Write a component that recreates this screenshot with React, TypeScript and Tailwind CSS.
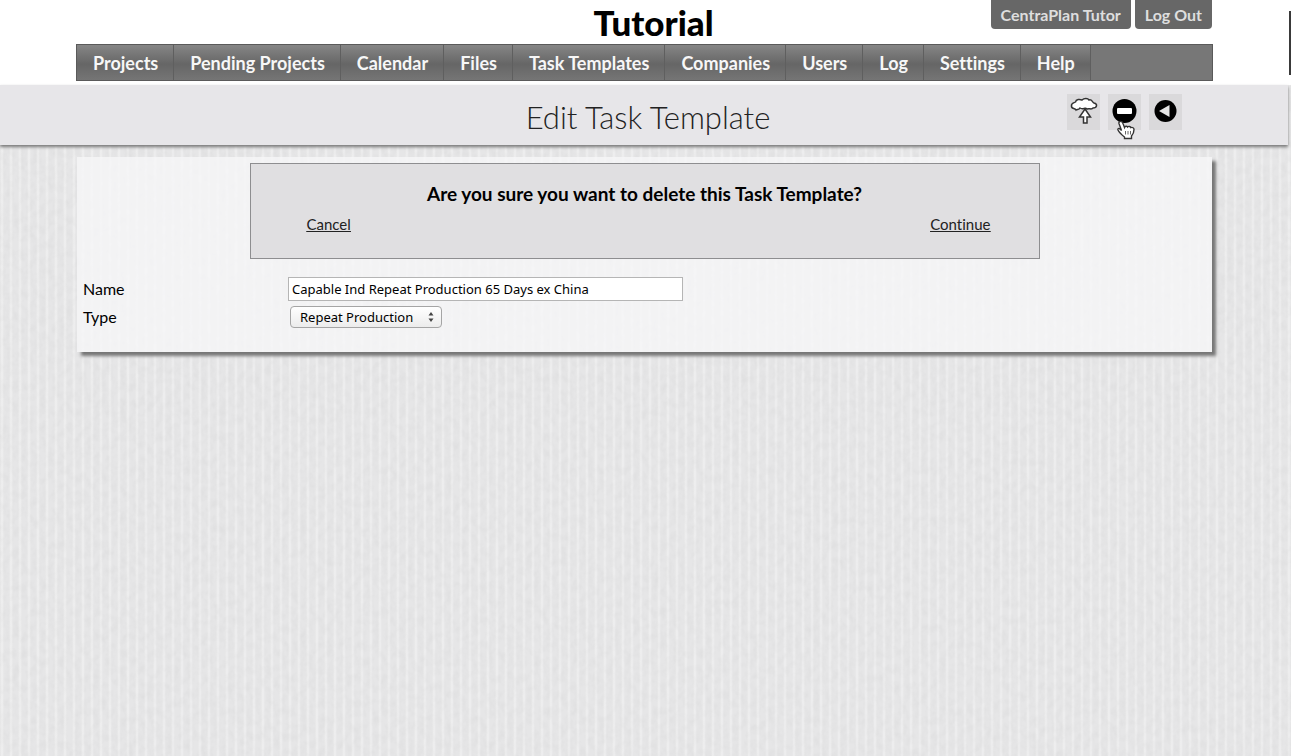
import { useState } from "react";

const navItems = [
    "Projects",
    "Pending Projects",
    "Calendar",
    "Files",
    "Task Templates",
    "Companies",
    "Users",
    "Log",
    "Settings",
    "Help",
];

const templateTypes = ["Repeat Production", "New Production", "Sample"];

// ribbed paper grain behind the page
function PaperTexture() {
    return (
        <svg className="absolute inset-0 -z-10 size-full" aria-hidden="true">
            <filter id="grain" x="0" y="0" width="100%" height="100%">
                <feTurbulence type="fractalNoise" baseFrequency="0.15 0.12" numOctaves="3" seed="4" />
                <feColorMatrix values="0 0 0 0 0.3  0 0 0 0 0.3  0 0 0 0 0.3  0.14 0 0 0 -0.05" />
            </filter>
            <rect width="100%" height="100%" filter="url(#grain)" />
        </svg>
    );
}

function UploadIcon() {
    return (
        <svg viewBox="0 0 32 32" className="size-8" aria-hidden="true">
            <path
                d="M8 16C7 14 3 15 3.500 12C3 9 6 9 7.500 8C8 5 12 5 14 6C16 4 20 4 21 6C24 5 24 8 26 9C30 10 29 14 25 14C24 16 21 14 19 15C17 13 15 16 12 14C11 16 9 15 8 16Z"
                fill="#fff"
                stroke="#333"
                strokeWidth="1.500"
            />
            <path
                d="M17 15L22.500 23H19V29H15.500V23H11.500Z"
                fill="#fff"
                stroke="#333"
                strokeWidth="1.500"
            />
        </svg>
    );
}

function DeleteIcon() {
    return (
        <svg viewBox="0 0 32 32" className="size-8" aria-hidden="true">
            <circle cx="15.500" cy="17" r="12" fill="#000" />
            <rect x="8" y="14" width="15" height="6" rx="1" fill="#fff" />
        </svg>
    );
}

function BackIcon() {
    return (
        <svg viewBox="0 0 32 32" className="size-8" aria-hidden="true">
            <circle cx="15.500" cy="17" r="11" fill="#000" />
            <path d="M9 17L19.500 11V23Z" fill="#e4e4e4" />
        </svg>
    );
}

function HandCursor() {
    return (
        <svg viewBox="0 0 20 20" className="absolute top-[26px] left-2 size-5" aria-hidden="true">
            <path
                d="M4 1.500C5.500 1 6.500 2 7 3.500L8.500 7.500C9 6 11 6 11.500 7C12.500 6 14.500 6.300 14.800 7.600C16.500 7 18 8 18 9.500C18 12.500 17.500 14 15.500 16V18.500H8.500V17C6 15 3.500 13 2 10C1.500 8.500 3 8 4 9L5.500 10.500L3 3.500C2.700 2.500 3 1.800 4 1.500Z"
                fill="#fff"
                stroke="#333"
                strokeWidth="1.400"
            />
            <path d="M9.500 11V14.500M12 11V14.500M14.500 11V14.500" stroke="#555" strokeWidth="0.900" />
        </svg>
    );
}

export default function App() {
    const [name, setName] = useState("Capable Ind Repeat Production 65 Days ex China");
    const [type, setType] = useState(templateTypes[0]);

    return (
        <div className="relative isolate min-h-screen bg-[#e6e6e7] bg-[repeating-linear-gradient(90deg,#fff0_0px,#fff6_2px,#fff0_4px,#fff0_9px)] font-['Lato',sans-serif] text-black [font-variant-ligatures:none]">
            <PaperTexture />
            <header className="relative bg-white px-[76px] pb-1">
                <div className="relative flex h-11 items-center justify-center">
                    <h1 className="pl-4 text-[35px] leading-11 font-black">Tutorial</h1>
                    <div className="absolute top-0 right-[3px] flex gap-1 text-base font-bold text-[#dedede]">
                        <a href="#account" className="h-[29px] rounded-b bg-[#676767] px-[10px] leading-[29px]">
                            CentraPlan Tutor
                        </a>
                        <a href="#logout" className="h-[29px] rounded-b bg-[#676767] px-[10px] leading-[29px]">
                            Log Out
                        </a>
                    </div>
                </div>
                <nav className="mr-[2px] flex h-[37px] border border-[#5a5a5a] bg-[#777] text-lg font-bold text-[#f7f7f7]">
                    {navItems.map((item) => (
                        <a
                            key={item}
                            href="#"
                            className="border-r border-[#5f5f5f] bg-linear-to-b from-[#868686] from-0% via-[#666] via-55% to-[#757575] pt-px pr-[15px] pl-4 leading-[34px] whitespace-nowrap"
                        >
                            {item}
                        </a>
                    ))}
                </nav>
                <div className="absolute top-[11px] right-0 h-16 w-[2px] bg-[#3a3a3a]" />
            </header>

            <div className="relative mr-[3px] flex h-[60px] items-center justify-center bg-[#e7e6e9] shadow-[0_2px_3px_#777]">
                <h2 className="pt-1 pl-2 text-[31px] leading-10 font-light text-[#222]">Edit Task Template</h2>
                <div className="absolute top-2 right-[106px] flex gap-2 pt-px">
                    <button type="button" aria-label="Upload" className="flex h-9 w-[33px] justify-center bg-[#dad9db]">
                        <UploadIcon />
                    </button>
                    <button type="button" aria-label="Delete" className="relative flex h-9 w-[33px] justify-center bg-[#dad9db]">
                        <DeleteIcon />
                        <HandCursor />
                    </button>
                    <button type="button" aria-label="Back" className="flex h-9 w-[33px] justify-center bg-[#dad9db]">
                        <BackIcon />
                    </button>
                </div>
            </div>

            <main className="mt-3 mr-[79px] ml-[77px] bg-[#f6f6f8]/80 px-[6px] pt-[6px] pb-[21px] shadow-[4px_4px_3px_#777]">
                <section className="mx-auto h-24 w-[790px] max-w-full border border-[#8e8e90] bg-[#e0dfe1] pt-4 pr-12 pl-14">
                    <p className="pr-2 text-center text-[19px] leading-7 font-bold">
                        Are you sure you want to delete this Task Template?
                    </p>
                    <div className="flex justify-between text-[15px] leading-8 text-[#222] underline">
                        <a href="#cancel">Cancel</a>
                        <a href="#continue">Continue</a>
                    </div>
                </section>
                <form className="mt-4 grid grid-cols-[205px_1fr] items-center text-base leading-7">
                    <label htmlFor="name">Name</label>
                    <input
                        id="name"
                        value={name}
                        onChange={(e) => setName(e.target.value)}
                        className="h-6 w-[395px] border border-[#b5b5b5] bg-white px-[3px] font-['Noto_Sans',sans-serif] text-[13px]"
                    />
                    <label htmlFor="type">Type</label>
                    <div className="relative ml-[2px] w-[152px]">
                        <select
                            id="type"
                            value={type}
                            onChange={(e) => setType(e.target.value)}
                            className="block h-[22px] w-full appearance-none rounded border border-[#a5a5a5] bg-linear-to-b from-white to-[#ececec] pl-[9px] font-['Noto_Sans',sans-serif] text-[13px] leading-5"
                        >
                            {templateTypes.map((t) => (
                                <option key={t}>{t}</option>
                            ))}
                        </select>
                        <svg viewBox="0 0 8 12" className="pointer-events-none absolute top-[5px] right-[7px] h-3 w-2" aria-hidden="true">
                            <path d="M4 1L6.500 4.500H1.500ZM4 11L1.500 7.500H6.500Z" fill="#444" />
                        </svg>
                    </div>
                </form>
            </main>
        </div>
    );
}
